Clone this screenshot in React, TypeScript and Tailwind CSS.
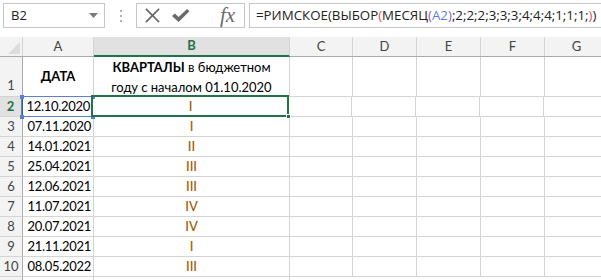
import React from "react";

const cols = [
  { key: "A", w: "w-[71px]" },
  { key: "B", w: "w-[196px]" },
  { key: "C", w: "w-[63px]" },
  { key: "D", w: "w-[64px]" },
  { key: "E", w: "w-[64px]" },
  { key: "F", w: "w-[64px]" },
  { key: "G", w: "w-[64px]" },
];

const rows = [
  { n: 3, date: "07.11.2020", q: "I" },
  { n: 4, date: "14.01.2021", q: "II" },
  { n: 5, date: "25.04.2021", q: "III" },
  { n: 6, date: "12.06.2021", q: "III" },
  { n: 7, date: "11.07.2021", q: "IV" },
  { n: 8, date: "20.07.2021", q: "IV" },
  { n: 9, date: "21.11.2021", q: "I" },
  { n: 10, date: "08.05.2022", q: "III" },
];

const cellFont = { fontFamily: "Lato, 'Noto Sans', sans-serif" };
const uiFont = { fontFamily: "'Open Sans', 'Noto Sans', sans-serif" };

const FormulaBar = () => (
  <div className="h-[37px] flex items-start pt-[3px] pl-[3px] bg-white">
    {/* Name box */}
    <div className="w-[102px] h-[25px] shrink-0 border border-[#c6c6c6] flex items-center justify-between pl-[7px] pr-[6px]">
      <span className="text-[13px] text-[#222]" style={uiFont}>B2</span>
      <svg width="9" height="5" viewBox="0 0 9 5">
        <path d="M0 0 H9 L4.5 5 Z" fill="#7a7a7a" />
      </svg>
    </div>
    {/* drag dots */}
    <div className="w-[31px] h-[25px] shrink-0 flex flex-col items-center justify-center gap-[3px]">
      <div className="w-[2px] h-[2px] bg-[#b0b0b0]" />
      <div className="w-[2px] h-[2px] bg-[#b0b0b0]" />
      <div className="w-[2px] h-[2px] bg-[#b0b0b0]" />
    </div>
    {/* Buttons */}
    <div className="w-[109px] h-[25px] shrink-0 border border-[#c6c6c6] flex items-center">
      <svg width="17" height="17" viewBox="0 0 18 18" className="ml-[7px]">
        <path d="M2 2 L16 16 M16 2 L2 16" stroke="#6a6a6a" strokeWidth="1.8" />
      </svg>
      <svg width="19" height="17" viewBox="0 0 20 18" className="ml-[10px]">
        <path d="M1 9.5 L4 6.8 L8 10.5 L17 2 L19.5 4.5 L8 16 Z" fill="#6a6a6a" />
      </svg>
      <span
        className="ml-[30px] text-[21px] italic leading-none text-[#6a6a6a]"
        style={{ fontFamily: "'Liberation Serif', serif" }}
      >
        fx
      </span>
    </div>
    {/* Formula input */}
    <div className="ml-[4px] flex-1 h-[25px] border border-r-0 border-[#c6c6c6] flex items-center pl-[6px] overflow-hidden whitespace-nowrap">
      <span className="text-[13.3px] text-[#222]" style={uiFont}>
        =РИМСКОЕ(ВЫБОР<span className="text-[#e0505a]">(</span>МЕСЯЦ
        <span className="text-[#9b59b6]">(</span>
        <span className="text-[#5b7fd6]">A2</span>
        <span className="text-[#9b59b6]">)</span>;2;2;2;3;3;3;4;4;4;1;1;1;
        <span className="text-[#e0505a]">)</span>)
      </span>
    </div>
  </div>
);

const ColHeader = () => (
  <div className="flex h-[20px] bg-[#f3f3f3] border-b border-[#ababab]">
    <div className="w-[23px] shrink-0 border-r border-[#d4d4d4] relative">
      <svg width="12" height="12" viewBox="0 0 12 12" className="absolute right-[2px] bottom-[2px]">
        <path d="M12 0 V12 H0 Z" fill="#dcdcdc" />
      </svg>
    </div>
    {cols.map((c) =>
      c.key === "B" ? (
        <div
          key={c.key}
          className={`${c.w} shrink-0 bg-[#e1e1e1] border-r border-[#d4d4d4] border-b-2 border-b-[#217346] -mb-px flex items-center justify-center text-[13px] font-bold text-[#217346]`}
          style={cellFont}
        >
          {c.key}
        </div>
      ) : (
        <div
          key={c.key}
          className={`${c.w} shrink-0 border-r border-[#d4d4d4] flex items-center justify-center text-[13px] text-[#444]`}
          style={cellFont}
        >
          {c.key}
        </div>
      )
    )}
  </div>
);

const EmptyCells = ({ h }: { h: string }) => (
  <>
    {cols.slice(2).map((c) => (
      <div key={c.key} className={`${c.w} ${h} shrink-0 border-r border-b border-[#d4d4d4]`} />
    ))}
  </>
);

export default function App() {
  return (
    <div className="w-[601px] h-[280px] overflow-hidden bg-white select-none">
      <FormulaBar />
      <ColHeader />

      {/* Row 1 */}
      <div className="flex">
        <div
          className="w-[23px] h-[40px] shrink-0 bg-[#f3f3f3] border-r border-r-[#ababab] border-b border-b-[#d4d4d4] flex items-end justify-center pb-[1px] text-[13px] text-[#444]"
          style={cellFont}
        >
          1
        </div>
        <div
          className="w-[71px] h-[40px] shrink-0 border-r border-b border-[#d4d4d4] flex items-center justify-center text-[13px] font-bold text-black"
          style={cellFont}
        >
          ДАТА
        </div>
        <div
          className="w-[196px] h-[40px] shrink-0 border-r border-b border-[#d4d4d4] flex flex-col items-center justify-center text-[13px] leading-[20px] text-black"
          style={cellFont}
        >
          <div>
            <span className="font-bold">КВАРТАЛЫ</span> в бюджетном
          </div>
          <div>году с началом 01.10.2020</div>
        </div>
        <EmptyCells h="h-[40px]" />
      </div>

      {/* Row 2 (selected) */}
      <div className="flex">
        <div
          className="w-[23px] h-[20px] shrink-0 bg-[#e1e1e1] border-r-2 border-r-[#217346] -mr-px border-b border-b-[#d4d4d4] flex items-center justify-center text-[13px] font-bold text-[#217346]"
          style={cellFont}
        >
          2
        </div>
        <div
          className="w-[71px] h-[20px] shrink-0 border-r border-b border-[#d4d4d4] flex items-center justify-end pr-[2px] text-[13px] tracking-[-0.3px] text-black relative"
          style={cellFont}
        >
          12.10.2020
          <div className="absolute -left-px -top-px right-[-1px] bottom-[-1px] border border-[#5b7fd6]" />
          <div className="absolute left-[-2px] top-[-2px] w-[4px] h-[4px] bg-[#5b7fd6]" />
          <div className="absolute right-[-3px] top-[-2px] w-[4px] h-[4px] bg-[#5b7fd6]" />
          <div className="absolute left-[-2px] bottom-[-3px] w-[4px] h-[4px] bg-[#5b7fd6]" />
          <div className="absolute right-[-3px] bottom-[-3px] w-[4px] h-[4px] bg-[#5b7fd6]" />
        </div>
        <div
          className="w-[196px] h-[20px] shrink-0 border-r border-b border-[#d4d4d4] flex items-center justify-center text-[13px] font-medium text-[#9c5d00] relative"
          style={cellFont}
        >
          I
          <div className="absolute -left-[2px] -top-[2px] right-[-1px] bottom-[-1px] border-2 border-[#217346]" />
          <div className="absolute right-[-3px] bottom-[-3px] w-[5px] h-[5px] bg-[#217346] border border-white" />
        </div>
        <EmptyCells h="h-[20px]" />
      </div>

      {rows.map((r) => (
        <div key={r.n} className="flex">
          <div
            className="w-[23px] h-[20px] shrink-0 bg-[#f3f3f3] border-r border-r-[#ababab] border-b border-b-[#d4d4d4] flex items-center justify-center text-[13px] text-[#444]"
            style={cellFont}
          >
            {r.n}
          </div>
          <div
            className="w-[71px] h-[20px] shrink-0 border-r border-b border-[#d4d4d4] flex items-center justify-end pr-[2px] text-[13px] tracking-[-0.3px] text-black"
            style={cellFont}
          >
            {r.date}
          </div>
          <div
            className="w-[196px] h-[20px] shrink-0 border-r border-b border-[#d4d4d4] flex items-center justify-center text-[13px] font-medium text-[#9c5d00]"
            style={cellFont}
          >
            {r.q}
          </div>
          <EmptyCells h="h-[20px]" />
        </div>
      ))}

      <div className="flex">
        <div className="w-[23px] h-[20px] shrink-0 bg-[#f3f3f3] border-r border-r-[#ababab]" />
        <div className="w-[71px] h-[20px] shrink-0 border-r border-[#d4d4d4]" />
        <div className="w-[196px] h-[20px] shrink-0 border-r border-[#d4d4d4]" />
      </div>
    </div>
  );
}
